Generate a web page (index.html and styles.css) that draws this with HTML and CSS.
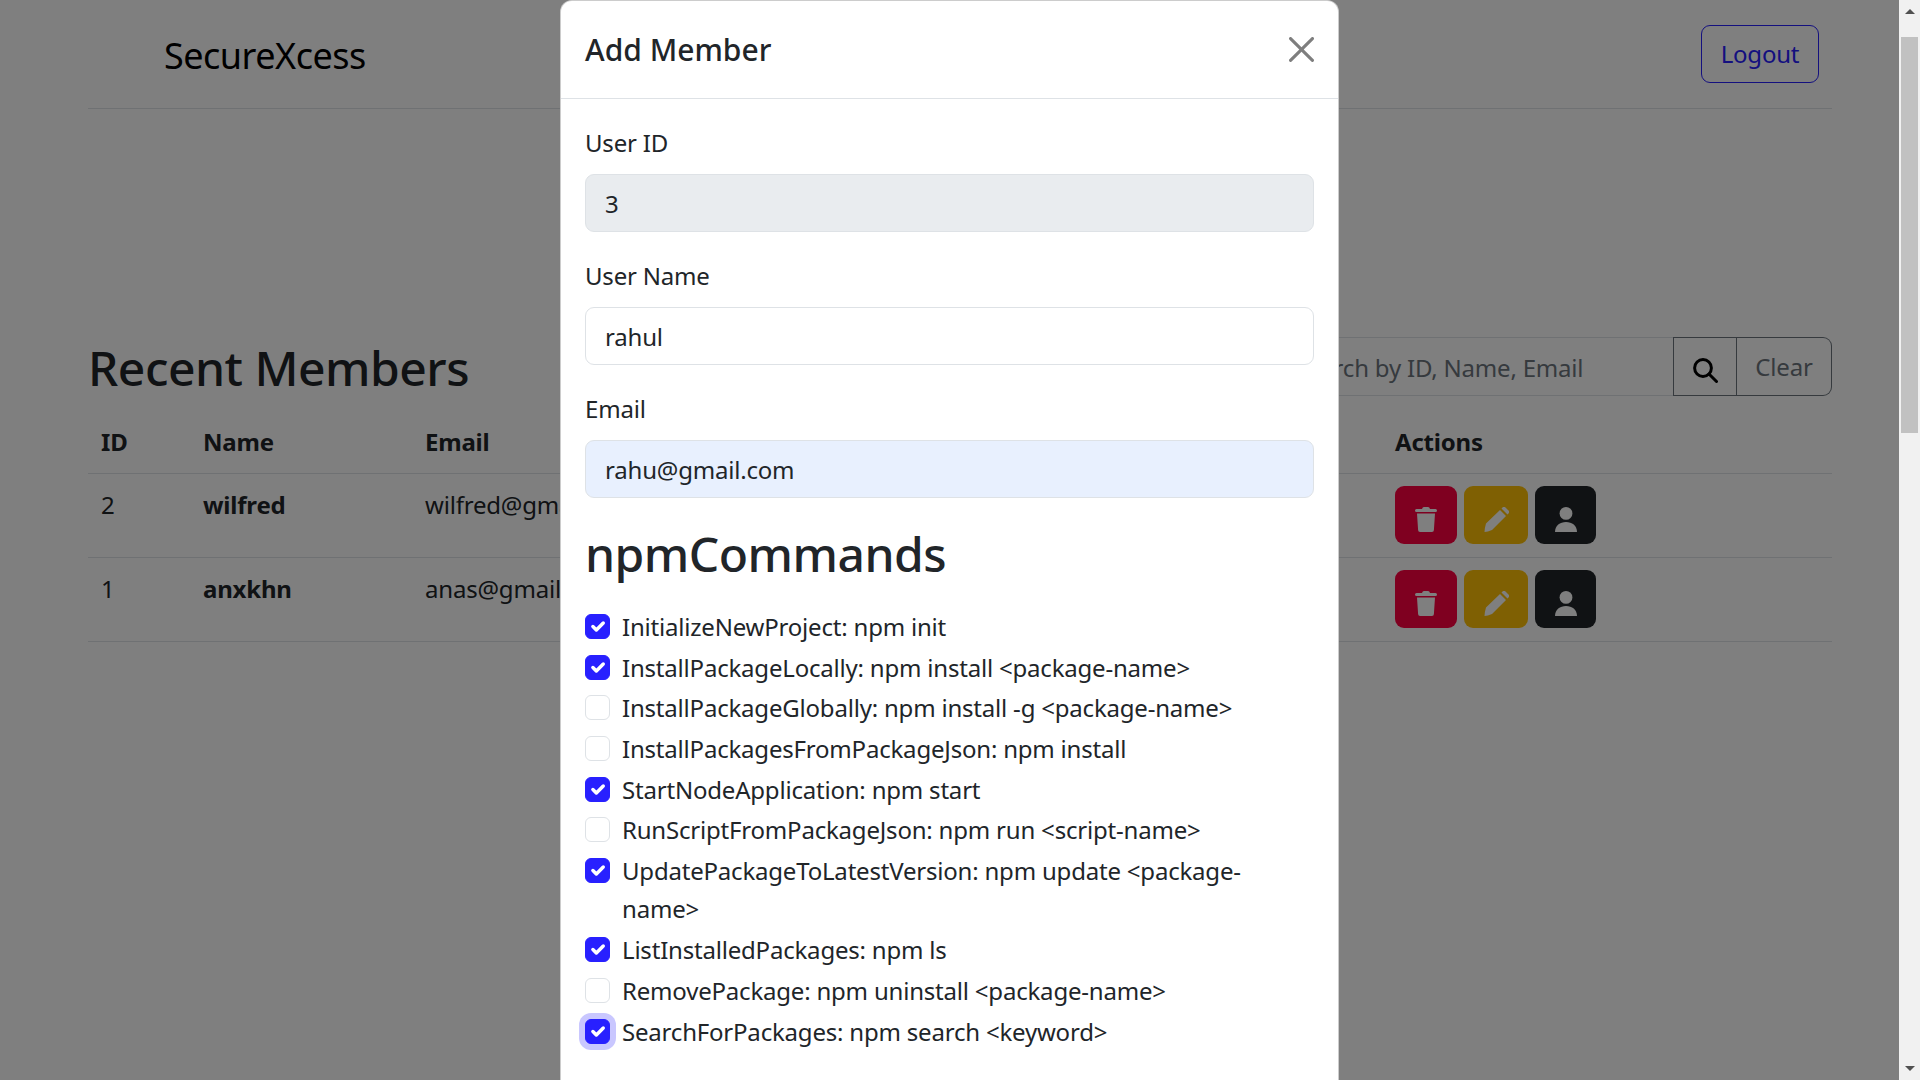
FILE: index.html
```html
<!DOCTYPE html>
<html lang="en">
<head>
    <meta charset="UTF-8">
    <meta name="viewport" content="width=device-width, initial-scale=1.0">
    <title>SecureXcess - Members</title>
    <link rel="stylesheet" href="styles.css">
</head>
<body>
    <div class="viewport">
        <div class="page">
            <nav class="navbar">
                <a class="brand" href="#">SecureXcess</a>
                <button class="btn logout-btn">Logout</button>
            </nav>

            <div class="members-header">
                <h2>Recent Members</h2>
                <div class="search-group">
                    <input type="text" class="search-input" placeholder="Search by ID, Name, Email">
                    <button class="btn search-btn">
                        <svg width="25" height="25" viewBox="0 0 25 25" fill="none" stroke="#000" stroke-width="3"><circle cx="10" cy="10" r="8.4"/><path d="M16 16l7.5 7.5" stroke-linecap="round"/></svg>
                    </button>
                    <button class="btn clear-btn">Clear</button>
                </div>
            </div>

            <table class="members-table">
                <thead>
                    <tr>
                        <th class="col-id">ID</th>
                        <th class="col-name">Name</th>
                        <th class="col-email">Email</th>
                        <th>Actions</th>
                    </tr>
                </thead>
                <tbody>
                    <tr>
                        <td>2</td>
                        <td><b>wilfred</b></td>
                        <td>wilfred@gmail.com</td>
                        <td>
                            <div class="actions">
                                <button class="icon-btn delete-btn"><svg width="22" height="25" viewBox="0 0 22 25" fill="#fff"><path d="M1.5 2H7Q7.500 0 9 0h4q1.500 0 2 2h5.500a1.500 1.500 0 0 1 0 3H1.500a1.500 1.500 0 0 1 0-3zM2 6.500h18l-1.100 16.500a2 2 0 0 1-2 2H5.100a2 2 0 0 1-2-2z"/></svg></button>
                                <button class="icon-btn edit-btn"><svg width="25" height="25" viewBox="0 0 25 25" fill="#fff"><path d="M2 16.500L16 3l6 6-14 14Q3.500 25 .5 25 .5 21.500 2 16.500zM17.500 1.500l1-1a2.200 2.200 0 0 1 3 0l3 3a2.200 2.200 0 0 1 0 3l-1 1z"/></svg></button>
                                <button class="icon-btn user-btn"><svg width="22" height="25" viewBox="0 0 22 25" fill="#fff"><circle cx="11" cy="6.400" r="6.400"/><path d="M0 25c0-6.500 5-10 11-10s11 3.500 11 10z"/></svg></button>
                            </div>
                        </td>
                    </tr>
                    <tr>
                        <td>1</td>
                        <td><b>anxkhn</b></td>
                        <td>anas@gmail.com</td>
                        <td>
                            <div class="actions">
                                <button class="icon-btn delete-btn"><svg width="22" height="25" viewBox="0 0 22 25" fill="#fff"><path d="M1.5 2H7Q7.500 0 9 0h4q1.500 0 2 2h5.500a1.500 1.500 0 0 1 0 3H1.500a1.500 1.500 0 0 1 0-3zM2 6.500h18l-1.100 16.500a2 2 0 0 1-2 2H5.100a2 2 0 0 1-2-2z"/></svg></button>
                                <button class="icon-btn edit-btn"><svg width="25" height="25" viewBox="0 0 25 25" fill="#fff"><path d="M2 16.500L16 3l6 6-14 14Q3.500 25 .5 25 .5 21.500 2 16.500zM17.500 1.500l1-1a2.200 2.200 0 0 1 3 0l3 3a2.200 2.200 0 0 1 0 3l-1 1z"/></svg></button>
                                <button class="icon-btn user-btn"><svg width="22" height="25" viewBox="0 0 22 25" fill="#fff"><circle cx="11" cy="6.400" r="6.400"/><path d="M0 25c0-6.500 5-10 11-10s11 3.500 11 10z"/></svg></button>
                            </div>
                        </td>
                    </tr>
                </tbody>
            </table>
        </div>

        <!-- Modal -->
        <div class="backdrop"></div>
        <div class="modal-content">
            <div class="modal-header">
                <h3>Add Member</h3>
                <button class="close-btn">
                    <svg width="25" height="25" viewBox="0 0 16 16" fill="#000"><path d="M.293.293a1 1 0 0 1 1.414 0L8 6.586 14.293.293a1 1 0 1 1 1.414 1.414L9.414 8l6.293 6.293a1 1 0 0 1-1.414 1.414L8 9.414l-6.293 6.293a1 1 0 0 1-1.414-1.414L6.586 8 .293 1.707a1 1 0 0 1 0-1.414z"/></svg>
                </button>
            </div>
            <form class="modal-body">
                <div class="form-group">
                    <label for="user-id">User ID</label>
                    <input type="text" id="user-id" class="form-control readonly" value="3" readonly>
                </div>
                <div class="form-group">
                    <label for="user-name">User Name</label>
                    <input type="text" id="user-name" class="form-control" value="rahul">
                </div>
                <div class="form-group">
                    <label for="email">Email</label>
                    <input type="email" id="email" class="form-control autofilled" value="rahu@gmail.com">
                </div>
                <h2 class="commands-title">npmCommands</h2>
                <div class="form-check"><input type="checkbox" id="c1" checked><label for="c1">InitializeNewProject: npm init</label></div>
                <div class="form-check"><input type="checkbox" id="c2" checked><label for="c2">InstallPackageLocally: npm install &lt;package-name&gt;</label></div>
                <div class="form-check"><input type="checkbox" id="c3"><label for="c3">InstallPackageGlobally: npm install -g &lt;package-name&gt;</label></div>
                <div class="form-check"><input type="checkbox" id="c4"><label for="c4">InstallPackagesFromPackageJson: npm install</label></div>
                <div class="form-check"><input type="checkbox" id="c5" checked><label for="c5">StartNodeApplication: npm start</label></div>
                <div class="form-check"><input type="checkbox" id="c6"><label for="c6">RunScriptFromPackageJson: npm run &lt;script-name&gt;</label></div>
                <div class="form-check"><input type="checkbox" id="c7" checked><label for="c7">UpdatePackageToLatestVersion: npm update &lt;package-name&gt;</label></div>
                <div class="form-check"><input type="checkbox" id="c8" checked><label for="c8">ListInstalledPackages: npm ls</label></div>
                <div class="form-check"><input type="checkbox" id="c9"><label for="c9">RemovePackage: npm uninstall &lt;package-name&gt;</label></div>
                <div class="form-check"><input type="checkbox" id="c10" class="focused" checked><label for="c10">SearchForPackages: npm search &lt;keyword&gt;</label></div>
            </form>
        </div>
    </div>

    <div class="scrollbar">
        <div class="arrow-up"></div>
        <div class="thumb"></div>
        <div class="arrow-down"></div>
    </div>
</body>
</html>
```

FILE: styles.css
```css
* {
    box-sizing: border-box;
}
body {
    font-family: "Noto Sans", sans-serif;
    font-size: 24px;
    line-height: 1.6;
    letter-spacing: -0.2px;
    color: #212529;
    margin: 0;
    height: 100vh;
    display: flex;
    overflow: hidden;
    background: #fff;
}
button, input {
    font-family: inherit;
    letter-spacing: inherit;
}
.viewport {
    position: relative;
    flex: 1;
    overflow: hidden;
}
.page {
    padding: 0 67px 0 88px;
}
.navbar {
    display: flex;
    justify-content: space-between;
    align-items: center;
    height: 109px;
    padding: 0 13px 0 76px;
    border-bottom: 1px solid #dee2e6;
}
.brand {
    margin-top: 4px;
    font-size: 36px;
    letter-spacing: -0.5px;
    color: #000;
    text-decoration: none;
}
.btn {
    font-size: 24px;
    line-height: 1.5;
    background: transparent;
    border-radius: 9px;
    cursor: pointer;
}
.logout-btn {
    height: 58px;
    width: 118px;
    padding: 0;
    color: #2820ff;
    border: 1px solid #2820ff;
}
.members-header {
    display: flex;
    justify-content: space-between;
    align-items: center;
    margin-top: 228px;
}
.members-header h2 {
    margin: 0;
    padding-top: 2px;
    font-size: 48px;
    font-weight: 500;
    line-height: 1.2;
    letter-spacing: -0.5px;
}
.search-group {
    display: flex;
    height: 59px;
}
.search-input {
    width: 398px;
    padding: 2px 18px 0;
    font-size: 24px;
    border: 1px solid #dee2e6;
    border-right: none;
    border-radius: 9px 0 0 9px;
}
.search-input::placeholder {
    color: #6c757d;
}
.search-btn {
    width: 64px;
    padding: 8px 0 0;
    border: 1px solid #6c757d;
    border-radius: 0;
    display: flex;
    justify-content: center;
    align-items: center;
}
.clear-btn {
    width: 95px;
    padding: 0;
    color: #6c757d;
    border: 1px solid #6c757d;
    border-left: none;
    border-radius: 0 9px 9px 0;
}
.members-table {
    width: 100%;
    margin-top: 14px;
    border-collapse: collapse;
    table-layout: fixed;
}
.members-table th {
    text-align: left;
    font-weight: 700;
    padding: 12px;
    border-bottom: 1px solid #dee2e6;
}
.members-table td {
    vertical-align: top;
    padding: 12px 12px 13px;
    border-bottom: 1px solid #dee2e6;
}
.members-table tr > :first-child {
    padding-left: 13px;
}
.col-id {
    width: 103px;
}
.col-name {
    width: 222px;
}
.col-email {
    width: 970px;
}
.actions {
    display: flex;
    gap: 7px;
}
.icon-btn {
    height: 58px;
    width: 62px;
    padding: 9px 0 0;
    border: none;
    border-radius: 9px;
    display: flex;
    justify-content: center;
    align-items: center;
    cursor: pointer;
}
.delete-btn {
    background: #ff0040;
}
.edit-btn {
    background: #ffc107;
    width: 64px;
}
.user-btn {
    background: #212529;
    width: 61px;
}
.backdrop {
    position: absolute;
    inset: 0;
    background: rgba(0, 0, 0, 0.5);
}
.modal-content {
    position: absolute;
    top: 0;
    left: 560px;
    width: 779px;
    background: #fff;
    border: 1px solid rgba(0, 0, 0, 0.2);
    border-radius: 12px;
}
.modal-header {
    display: flex;
    justify-content: space-between;
    align-items: center;
    height: 98px;
    padding: 0 24px;
    border-bottom: 1px solid #dee2e6;
}
.modal-header h3 {
    margin: 0;
    font-size: 30px;
    font-weight: 500;
    line-height: 1.5;
    letter-spacing: 0;
}
.close-btn {
    background: none;
    border: none;
    padding: 0;
    display: flex;
    opacity: 0.5;
    cursor: pointer;
}
.modal-body {
    padding: 25px 24px 100px;
}
.form-group {
    margin-bottom: 24.6px;
}
.form-group label {
    display: block;
    margin-bottom: 12px;
}
.form-control {
    display: block;
    width: 100%;
    height: 58px;
    padding: 0 19px;
    font-size: 24px;
    color: #212529;
    border: 1px solid #dee2e6;
    border-radius: 9px;
}
.readonly {
    background: #e9ecef;
}
.autofilled {
    background: #e8f0fe;
}
.commands-title {
    margin: 0 0 25px;
    padding-top: 2.4px;
    font-size: 48px;
    font-weight: 500;
    line-height: 1.2;
    letter-spacing: -0.5px;
}
.form-check {
    display: flex;
    gap: 12px;
    margin-bottom: 2.3px;
}
.form-check input {
    appearance: none;
    flex: none;
    width: 25px;
    height: 25px;
    margin: 6px 0 0;
    background: #fff;
    border: 1px solid #dee2e6;
    border-radius: 6px;
}
.form-check input:checked {
    background: #2820ff url("data:image/svg+xml,%3csvg xmlns='http://www.w3.org/2000/svg' viewBox='0 0 20 20'%3e%3cpath fill='none' stroke='%23fff' stroke-linecap='round' stroke-linejoin='round' stroke-width='3' d='m6 10 3 3 6-6'/%3e%3c/svg%3e") center / 100% no-repeat;
    border-color: #2820ff;
}
.form-check input.focused {
    box-shadow: 0 0 0 6px rgba(40, 32, 255, 0.25);
}
.scrollbar {
    flex: none;
    width: 21px;
    height: 100%;
    background: #f1f1f1;
    display: flex;
    flex-direction: column;
    align-items: center;
    position: relative;
}
.thumb {
    width: 17px;
    height: 396px;
    background: #c1c1c1;
    margin-top: 37px;
}
.arrow-up, .arrow-down {
    position: absolute;
    width: 0;
    height: 0;
    border-left: 5px solid transparent;
    border-right: 5px solid transparent;
}
.arrow-up {
    top: 9px;
    border-bottom: 5px solid #505050;
}
.arrow-down {
    bottom: 9px;
    border-top: 5px solid #505050;
}
```
